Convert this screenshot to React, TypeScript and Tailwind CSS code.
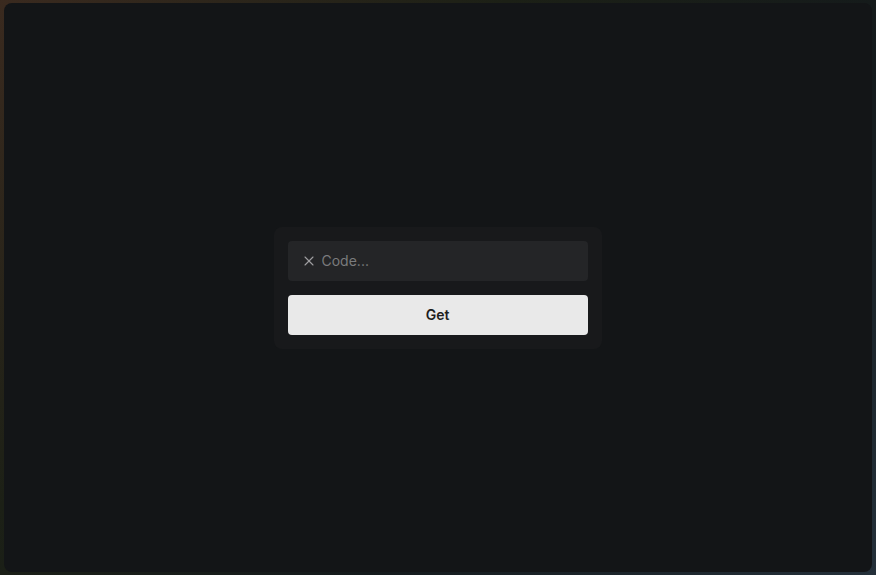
import { X } from 'lucide-react';

export default function App() {
  return (
    <div className="h-[575px] w-[876px] bg-[linear-gradient(135deg,#3a2a1f_0%,#1c2016_35%,#141a1c_65%,#24303a_100%)] p-[3px_4px_3px_4px] font-['Inter',sans-serif]">
      {/* Window */}
      <div className="flex h-full w-full items-center justify-center rounded-lg bg-[#131517]">
        {/* Card */}
        <div className="mr-[1px] flex w-[328px] flex-col gap-[14px] rounded-lg bg-[#18191b] p-[14px]">
          <div className="flex h-10 items-center gap-[5px] rounded bg-[#242527] px-[13px]">
            <X className="h-4 w-4 shrink-0 text-[#a0a0a2]" strokeWidth={1.6} />
            <input
              placeholder="Code..."
              className="w-full bg-transparent text-sm text-[#ddd] outline-none placeholder:text-[#7a7b7d]"
            />
          </div>
          <button className="h-10 rounded bg-[#e9e9e9] text-sm font-semibold text-[#1e1e1e]">
            Get
          </button>
        </div>
      </div>
    </div>
  );
}
